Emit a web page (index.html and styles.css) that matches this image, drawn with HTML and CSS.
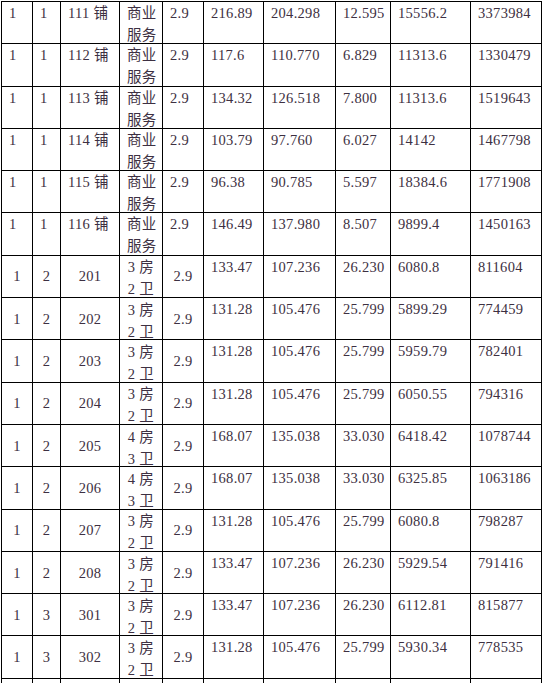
FILE: index.html
```html
<!DOCTYPE html>
<html lang="zh">
<head>
<meta charset="utf-8">
<title>房源价格表</title>
<link rel="stylesheet" href="styles.css">
</head>
<body>
<table class="grid">
<colgroup>
<col class="c1"><col class="c2"><col class="c3"><col class="c4"><col class="c5"><col class="c6"><col class="c7"><col class="c8"><col class="c9"><col class="c10">
</colgroup>
<tbody>
<tr class="shop"><td>1</td><td>1</td><td>111 铺</td><td><div class="wrap">商业服务</div></td><td>2.9</td><td>216.89</td><td>204.298</td><td>12.595</td><td>15556.2</td><td>3373984</td></tr>
<tr class="shop"><td>1</td><td>1</td><td>112 铺</td><td><div class="wrap">商业服务</div></td><td>2.9</td><td>117.6</td><td>110.770</td><td>6.829</td><td>11313.6</td><td>1330479</td></tr>
<tr class="shop"><td>1</td><td>1</td><td>113 铺</td><td><div class="wrap">商业服务</div></td><td>2.9</td><td>134.32</td><td>126.518</td><td>7.800</td><td>11313.6</td><td>1519643</td></tr>
<tr class="shop"><td>1</td><td>1</td><td>114 铺</td><td><div class="wrap">商业服务</div></td><td>2.9</td><td>103.79</td><td>97.760</td><td>6.027</td><td>14142</td><td>1467798</td></tr>
<tr class="shop"><td>1</td><td>1</td><td>115 铺</td><td><div class="wrap">商业服务</div></td><td>2.9</td><td>96.38</td><td>90.785</td><td>5.597</td><td>18384.6</td><td>1771908</td></tr>
<tr class="shop"><td>1</td><td>1</td><td>116 铺</td><td><div class="wrap">商业服务</div></td><td>2.9</td><td>146.49</td><td>137.980</td><td>8.507</td><td>9899.4</td><td>1450163</td></tr>
<tr class="flat"><td>1</td><td>2</td><td>201</td><td><div class="wrap">3 房 2 卫</div></td><td>2.9</td><td>133.47</td><td>107.236</td><td>26.230</td><td>6080.8</td><td>811604</td></tr>
<tr class="flat"><td>1</td><td>2</td><td>202</td><td><div class="wrap">3 房 2 卫</div></td><td>2.9</td><td>131.28</td><td>105.476</td><td>25.799</td><td>5899.29</td><td>774459</td></tr>
<tr class="flat"><td>1</td><td>2</td><td>203</td><td><div class="wrap">3 房 2 卫</div></td><td>2.9</td><td>131.28</td><td>105.476</td><td>25.799</td><td>5959.79</td><td>782401</td></tr>
<tr class="flat"><td>1</td><td>2</td><td>204</td><td><div class="wrap">3 房 2 卫</div></td><td>2.9</td><td>131.28</td><td>105.476</td><td>25.799</td><td>6050.55</td><td>794316</td></tr>
<tr class="flat"><td>1</td><td>2</td><td>205</td><td><div class="wrap">4 房 3 卫</div></td><td>2.9</td><td>168.07</td><td>135.038</td><td>33.030</td><td>6418.42</td><td>1078744</td></tr>
<tr class="flat"><td>1</td><td>2</td><td>206</td><td><div class="wrap">4 房 3 卫</div></td><td>2.9</td><td>168.07</td><td>135.038</td><td>33.030</td><td>6325.85</td><td>1063186</td></tr>
<tr class="flat"><td>1</td><td>2</td><td>207</td><td><div class="wrap">3 房 2 卫</div></td><td>2.9</td><td>131.28</td><td>105.476</td><td>25.799</td><td>6080.8</td><td>798287</td></tr>
<tr class="flat"><td>1</td><td>2</td><td>208</td><td><div class="wrap">3 房 2 卫</div></td><td>2.9</td><td>133.47</td><td>107.236</td><td>26.230</td><td>5929.54</td><td>791416</td></tr>
<tr class="flat"><td>1</td><td>3</td><td>301</td><td><div class="wrap">3 房 2 卫</div></td><td>2.9</td><td>133.47</td><td>107.236</td><td>26.230</td><td>6112.81</td><td>815877</td></tr>
<tr class="flat"><td>1</td><td>3</td><td>302</td><td><div class="wrap">3 房 2 卫</div></td><td>2.9</td><td>131.28</td><td>105.476</td><td>25.799</td><td>5930.34</td><td>778535</td></tr>
<tr class="flat next"><td></td><td></td><td></td><td></td><td></td><td></td><td></td><td></td><td></td><td></td></tr>
</tbody>
</table>
</body>
</html>
```

FILE: styles.css
```css
html, body {
  margin: 0;
  padding: 0;
  background: #ffffff;
}

body {
  padding: 1px 0 0 1px;
  overflow: hidden;
  height: 682px;
}

.grid {
  border-collapse: collapse;
  table-layout: fixed;
  width: 540px;
  font-family: "Liberation Serif", "Noto Sans CJK SC", serif;
  font-size: 14.5px;
  letter-spacing: 0.3px;
  color: #3d3042;
}

.c1 { width: 31px; }
.c2 { width: 28px; }
.c3 { width: 59px; }
.c4 { width: 43px; }
.c5 { width: 41px; }
.c6 { width: 60px; }
.c7 { width: 72px; }
.c8 { width: 55px; }
.c9 { width: 80px; }
.c10 { width: 71px; }

.grid tr {
  height: 42.3px;
}

.grid td {
  border: 1px solid #000000;
  padding: 0 2px 0 7px;
  line-height: 22px;
  vertical-align: top;
  white-space: normal;
  overflow: visible;
}

.wrap {
  height: 40px;
  line-height: 22px;
}

.flat td:nth-child(-n+5) {
  vertical-align: middle;
  text-align: center;
  padding: 0 3px;
}
```
